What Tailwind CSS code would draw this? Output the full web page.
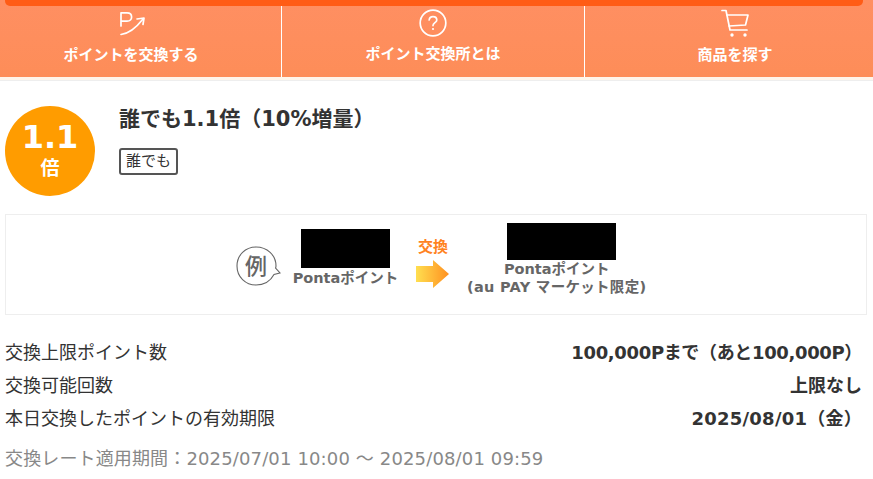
<!DOCTYPE html>
<html lang="ja">
<head>
    <meta charset="UTF-8">
    <meta name="viewport" content="width=device-width, initial-scale=1">
    <title>ポイント交換</title>
    <script src="https://cdn.jsdelivr.net/npm/@tailwindcss/browser@4"></script>
</head>
<body class="bg-white text-[#333] h-[479px] overflow-hidden font-['DejaVu_Sans','Noto_Sans_CJK_JP',sans-serif]">

    <!-- Nav -->
    <div class="relative h-[77px] bg-linear-to-b from-[#ff8f62] to-[#fd8d58] flex">
        <div class="absolute left-[5px] right-[10px] top-0 h-[6px] bg-[#ff5c16] rounded-b-[5px]"></div>
        <a class="w-[281px] pr-[19px] flex flex-col items-center text-white">
            <svg class="mt-[11px] ml-[4px] w-[28px] h-[26px]" viewBox="0 0 28 26" fill="none" stroke="white" stroke-width="1.7" stroke-linecap="round" stroke-linejoin="round">
                <path d="M2 15V1.8H8C11 1.8 12.6 3.6 12.6 6C12.6 8.4 11 10.2 8 10.2H2"/>
                <path d="M2 23.5C10 22.5 17 17 24 8"/>
                <path d="M18 8L25 7L24 13.5"/>
            </svg>
            <span class="mt-[8px] text-[15px] leading-[20px] font-bold">ポイントを交換する</span>
        </a>
        <a class="w-[303px] border-l border-white flex flex-col items-center text-white">
            <svg class="mt-[9px] w-[28px] h-[28px]" viewBox="0 0 28 28" fill="none" stroke="white" stroke-width="1.7">
                <circle cx="14" cy="14" r="12.8"/>
                <path d="M10.2 11C10.4 8.8 12 7.6 14 7.6C16.2 7.6 17.8 9 17.8 11C17.8 13.6 14 13.8 14 16.6" stroke-linecap="round"/>
                <circle cx="14" cy="20" r="1.1" fill="white" stroke="none"/>
            </svg>
            <span class="mt-[7px] text-[15px] leading-[20px] font-bold">ポイント交換所とは</span>
        </a>
        <a class="flex-1 pl-[12px] border-l border-white flex flex-col items-center text-white">
            <svg class="mt-[9px] w-[28px] h-[29px]" viewBox="0 0 28 29" fill="none" stroke="white" stroke-width="1.7" stroke-linecap="round" stroke-linejoin="round">
                <path d="M1 1.5H5L9 21H26"/>
                <path d="M6 6H27L24.5 16L8 17"/>
                <circle cx="11" cy="26" r="1.7" fill="white" stroke="none"/>
                <circle cx="24" cy="26" r="1.7" fill="white" stroke="none"/>
            </svg>
            <span class="mt-[7px] text-[15px] leading-[20px] font-bold">商品を探す</span>
        </a>
    </div>
    <div class="h-[3px] bg-[#fff5ea]"></div>
    <div class="h-[1px] bg-[#eeeeee]"></div>

    <!-- Rate -->
    <div class="flex px-[5px] pt-[25px]">
        <div class="w-[90px] h-[90px] rounded-full bg-[#ff9c00] text-white flex flex-col items-center font-bold shrink-0">
            <span class="mt-[12px] text-[32px] leading-[38px]">1.1</span>
            <span class="text-[19px] leading-[24px]">倍</span>
        </div>
        <div class="ml-[24px]">
            <h2 class="text-[21px] leading-[26px] font-bold">誰でも1.1倍（10%増量）</h2>
            <span class="inline-block mt-[16px] border-2 border-[#555] rounded-[3px] px-[5px] text-[15px] leading-[23px]">誰でも</span>
        </div>
    </div>

    <!-- Example -->
    <div class="ml-[5px] mr-[6px] mt-[18px] h-[101px] border border-[#eeeeee] flex pl-[230px]">
        <div class="flex items-start">
            <svg class="mt-[31px] w-[45px] h-[40px]" viewBox="0 0 45 40" fill="none">
                <path d="M20 1C9.5 1 1 9 1 20C1 31 9.5 39 20 39C28 39 34.5 35 38 28.5L44 27L39.6 22C39.9 21 40 20.5 40 20C40 9 31 1 20 1Z" fill="white" stroke="#666" stroke-width="1.1"/>
                <text x="20" y="28" text-anchor="middle" font-size="22" font-weight="500" fill="#666" font-family="Noto Sans CJK JP">例</text>
            </svg>
            <div class="ml-[12px] mt-[14px] flex flex-col items-center w-[105px]">
                <div class="w-[89px] h-[39px] bg-black"></div>
                <p class="text-[14.5px] leading-[20px] font-bold text-[#666] whitespace-nowrap">Pontaポイント</p>
            </div>
            <div class="ml-[18px] mt-[22px] flex flex-col items-center">
                <span class="text-[15px] leading-[20px] font-bold text-[#ff8220]">交換</span>
                <svg class="mt-[3px] w-[34px] h-[28px]" viewBox="0 0 34 28">
                    <defs>
                        <linearGradient id="arr" x1="0" x2="1" y1="0" y2="0">
                            <stop offset="0" stop-color="#ffdf50"/>
                            <stop offset="1" stop-color="#ff9020"/>
                        </linearGradient>
                    </defs>
                    <path d="M0 6H17V0L33 14L17 28V22H0Z" fill="url(#arr)"/>
                </svg>
            </div>
            <div class="ml-[17px] mt-[8px] flex flex-col items-center">
                <div class="w-[109px] h-[37px] ml-[9px] bg-black"></div>
                <p class="text-[14.5px] leading-[18px] font-bold text-[#666] text-center whitespace-nowrap">Pontaポイント<br><span class="tracking-[0.3px]">(au PAY マーケット限定)</span></p>
            </div>
        </div>
    </div>

    <!-- Details -->
    <div class="pl-[5px] pr-[11px] mt-[21px] text-[18px]">
        <div class="flex justify-between h-[33px] leading-[33px]">
            <span>交換上限ポイント数</span>
            <span class="font-bold tracking-[-0.35px]">100,000Pまで（あと100,000P）</span>
        </div>
        <div class="flex justify-between h-[33px] leading-[33px]">
            <span>交換可能回数</span>
            <span class="font-bold">上限なし</span>
        </div>
        <div class="flex justify-between h-[33px] leading-[33px]">
            <span>本日交換したポイントの有効期限</span>
            <span class="font-bold tracking-[0.25px]">2025/08/01（金）</span>
        </div>
        <p class="mt-[11px] leading-[26px] text-[#888] tracking-[0.14px]">交換レート適用期間：2025/07/01 10:00 ～ 2025/08/01 09:59</p>
    </div>

</body>
</html>
